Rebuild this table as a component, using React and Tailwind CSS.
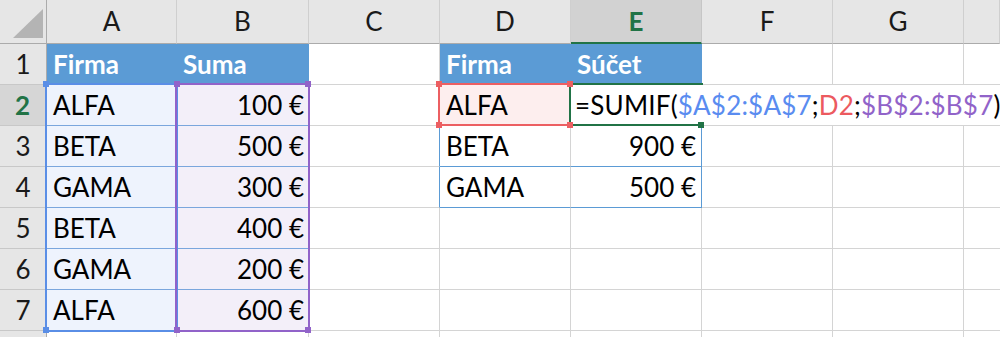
import React from 'react';

// column letters; H is only partly visible at the right edge
const COLS = ['A', 'B', 'C', 'D', 'E', 'F', 'G', 'H'];

const GRID = 'border-r border-b border-[#d4d4d4]';

const Cell = ({ children, className = '' }) => (
  <div className={`flex items-center px-[6px] whitespace-nowrap overflow-hidden ${className}`}>
    {children}
  </div>
);

const ColHeader = ({ name }) => {
  const active = name === 'E';
  return (
    <div
      className={`flex items-center justify-center border-b border-[#ababab] ${
        active
          ? 'bg-[#d2d2d2] text-[#217346] font-bold border-b-2 border-b-[#217346] border-r border-r-[#c6c6c6]'
          : 'bg-[#e6e6e6] text-[#1a1a1a] border-r border-r-[#cfcfcf]'
      }`}
    >
      {name !== 'H' && name}
    </div>
  );
};

const RowHeader = ({ n }) => {
  const active = n === 2;
  return (
    <div
      className={`flex items-center justify-center border-b border-[#c8c8c8] ${
        active
          ? 'bg-[#d6d6d6] text-[#217346] font-bold border-r-2 border-r-[#217346]'
          : 'bg-[#e6e6e6] text-[#1a1a1a] border-r border-r-[#ababab]'
      }`}
    >
      {n < 8 && n}
    </div>
  );
};

const Corner = () => (
  <div className="bg-[#e6e6e6] border-r border-b border-[#ababab] relative">
    <svg width="46" height="43" className="absolute left-0 top-0">
      <polygon points="13,38 43,38 43,9" fill="#b4b4b4" />
    </svg>
  </div>
);

const Handle = ({ className }) => <div className={`absolute w-[6px] h-[6px] ${className}`} />;

const sourceRows = [
  ['ALFA', '100 €'],
  ['BETA', '500 €'],
  ['GAMA', '300 €'],
  ['BETA', '400 €'],
  ['GAMA', '200 €'],
  ['ALFA', '600 €'],
];

const summary = {
  3: ['BETA', '900 €'],
  4: ['GAMA', '500 €'],
};

export default function App() {
  const body = [];

  for (let r = 1; r <= 8; r++) {
    body.push(<RowHeader key={`h${r}`} n={r} />);

    // A, B
    if (r === 1) {
      body.push(
        <Cell key={`a${r}`} className="bg-[#5b9bd5] text-white font-bold">Firma</Cell>,
        <Cell key={`b${r}`} className="bg-[#5b9bd5] text-white font-bold">Suma</Cell>
      );
    } else if (r <= 7) {
      const [name, sum] = sourceRows[r - 2];
      body.push(
        <Cell key={`a${r}`} className="bg-[#eef3fd] border-b border-[#7aa6dd]">{name}</Cell>,
        <Cell key={`b${r}`} className="bg-[#f3eff9] border-b border-[#7aa6dd] justify-end pr-[5px]">{sum}</Cell>
      );
    } else {
      body.push(<Cell key={`a${r}`} className={GRID} />, <Cell key={`b${r}`} className={GRID} />);
    }

    // C
    body.push(
      <Cell
        key={`c${r}`}
        className={
          r === 3 || r === 4
            ? 'border-b border-b-[#d4d4d4] border-r border-r-[#5b9bd5]'
            : GRID
        }
      />
    );

    // D..H
    if (r === 1) {
      body.push(
        <Cell key={`d${r}`} className="bg-[#5b9bd5] text-white font-bold">Firma</Cell>,
        <Cell key={`e${r}`} className="bg-[#5b9bd5] text-white font-bold">Súčet</Cell>,
        <Cell key={`f${r}`} className={GRID} />,
        <Cell key={`g${r}`} className={GRID} />,
        <Cell key={`hh${r}`} className="border-b border-[#d4d4d4]" />
      );
    } else if (r === 2) {
      body.push(
        <Cell key={`d${r}`} className="bg-[#fdeeee]">ALFA</Cell>,
        <Cell key={`e${r}`} className="col-span-4 bg-white border-b border-[#d4d4d4] pl-[4px] tracking-[0.2px]">
          <span>=SUMIF(</span>
          <span className="text-[#5a8cf0]">$A$2:$A$7</span>
          <span>;</span>
          <span className="text-[#ec5a5f]">D2</span>
          <span>;</span>
          <span className="text-[#9163c9]">$B$2:$B$7</span>
          <span>)</span>
        </Cell>
      );
    } else {
      const row = summary[r];
      body.push(
        <Cell
          key={`d${r}`}
          className={row ? 'border-r border-r-[#d4d4d4] border-b border-b-[#5b9bd5]' : GRID}
        >
          {row && row[0]}
        </Cell>,
        <Cell
          key={`e${r}`}
          className={row ? 'border-r border-b border-[#5b9bd5] justify-end pr-[5px]' : GRID}
        >
          {row && row[1]}
        </Cell>,
        <Cell key={`f${r}`} className={GRID} />,
        <Cell key={`g${r}`} className={GRID} />,
        <Cell key={`hh${r}`} className="border-b border-[#d4d4d4]" />
      );
    }
  }

  return (
    <div className="relative w-[1000px] h-[337px] overflow-hidden bg-white text-black text-[26px] font-['Lato','Noto_Sans',sans-serif]">
      <div className="grid grid-cols-[47px_130px_132px_131px_131px_131px_131px_131px_1fr] grid-rows-[44px_repeat(8,41px)]">
        <Corner />
        {COLS.map((c) => (
          <ColHeader key={c} name={c} />
        ))}
        {body}
      </div>

      {/* reference ranges of the formula being edited */}
      <div className="absolute left-[45px] top-[83px] w-[133px] h-[249px] border-2 border-[#5a8ee6]" />
      <div className="absolute left-[175px] top-[83px] w-[135px] h-[249px] border-2 border-[#9163c9]" />
      <div className="absolute left-[438px] top-[83px] w-[133px] h-[43px] border-2 border-[#ec5f62]" />
      <div className="absolute left-[569px] top-[83px] w-[134px] h-[43px] border-t-2 border-l-2 border-b-2 border-[#217346]" />

      <Handle className="left-[43px] top-[81px] bg-[#5a8ee6]" />
      <Handle className="left-[43px] top-[327px] bg-[#5a8ee6]" />
      <Handle className="left-[174px] top-[81px] bg-[#9163c9]" />
      <Handle className="left-[305px] top-[81px] bg-[#9163c9]" />
      <Handle className="left-[174px] top-[327px] bg-[#9163c9]" />
      <Handle className="left-[305px] top-[327px] bg-[#9163c9]" />
      <Handle className="left-[436px] top-[81px] bg-[#ec5f62]" />
      <Handle className="left-[567px] top-[81px] bg-[#ec5f62]" />
      <Handle className="left-[436px] top-[122px] bg-[#ec5f62]" />
      <Handle className="left-[567px] top-[122px] bg-[#ec5f62]" />
      <Handle className="left-[698px] top-[122px] bg-[#217346]" />
    </div>
  );
}
